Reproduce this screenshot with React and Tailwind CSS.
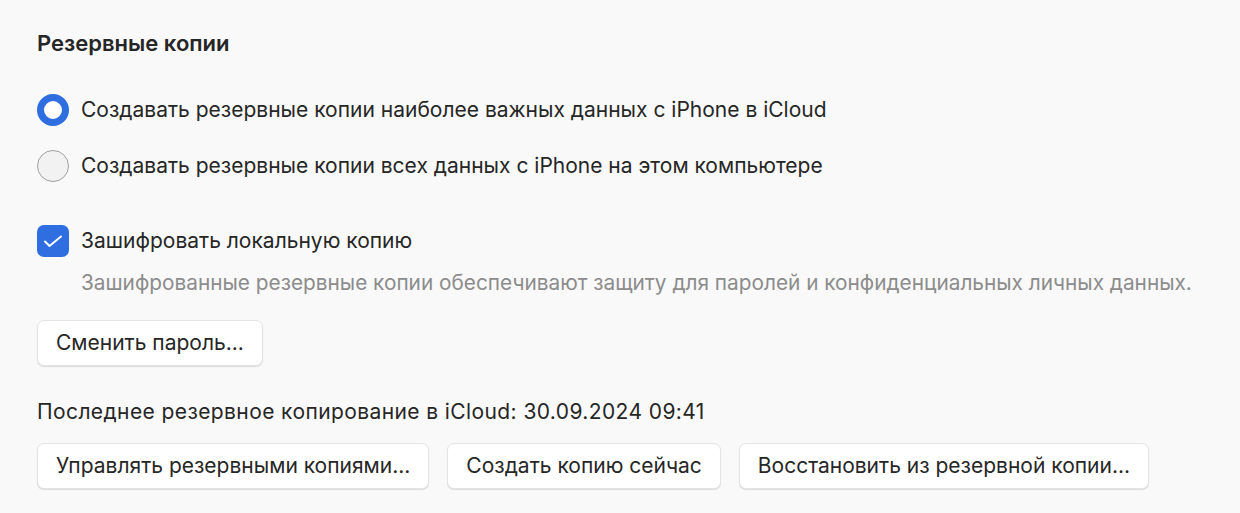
export default function App() {
  const btn = "h-[46px] px-[18px] bg-white rounded-[7px] border border-[#e4e4e4] shadow-[0_1px_1px_rgba(0,0,0,0.12)] text-[21px]";
  return (
    <div className="min-h-screen bg-[#f9f9f9] text-[#262626] pl-[37px] pt-[29px]" style={{ fontFamily: 'Inter, "Noto Sans", sans-serif' }}>
      <h2 className="text-[22px] leading-[28px] font-semibold">Резервные копии</h2>

      <div className="mt-[37px] flex flex-col gap-[24px]">
        <label className="flex items-center gap-[12px] h-[32px]">
          <span className="w-[32px] h-[32px] rounded-full border-[7.5px] border-[#2e6ee0] bg-white" />
          <span className="text-[21px]">Создавать резервные копии наиболее важных данных с iPhone в iCloud</span>
        </label>
        <label className="flex items-center gap-[12px] h-[32px]">
          <span className="w-[32px] h-[32px] rounded-full border-[1.5px] border-[#a0a0a0] bg-[#f2f2f2]" />
          <span className="text-[21px]">Создавать резервные копии всех данных с iPhone на этом компьютере</span>
        </label>
      </div>

      <label className="mt-[43px] flex items-center gap-[12px] h-[32px]">
        <span className="w-[32px] h-[32px] rounded-[7px] bg-[#2e6ee0]">
          <svg width="32" height="32" viewBox="0 0 32 32" fill="none">
            <path d="M8 16.5l4.5 4.5L24 11.5" stroke="white" strokeWidth="2" strokeLinecap="round" strokeLinejoin="round" />
          </svg>
        </span>
        <span className="text-[21px]">Зашифровать локальную копию</span>
      </label>
      <p className="mt-[14px] ml-[44px] text-[20.8px] leading-[24px] text-[#8c8c8c]">
        Зашифрованные резервные копии обеспечивают защиту для паролей и конфиденциальных личных данных.
      </p>

      <button className={`mt-[25px] ${btn}`}>Сменить пароль...</button>

      <p className="mt-[34px] text-[21px] leading-[24px] tracking-[0.4px]">Последнее резервное копирование в iCloud: 30.09.2024 09:41</p>

      <div className="mt-[19px] flex gap-[18px]">
        <button className={btn}>Управлять резервными копиями...</button>
        <button className={btn}>Создать копию сейчас</button>
        <button className={btn}>Восстановить из резервной копии...</button>
      </div>
    </div>
  );
}
